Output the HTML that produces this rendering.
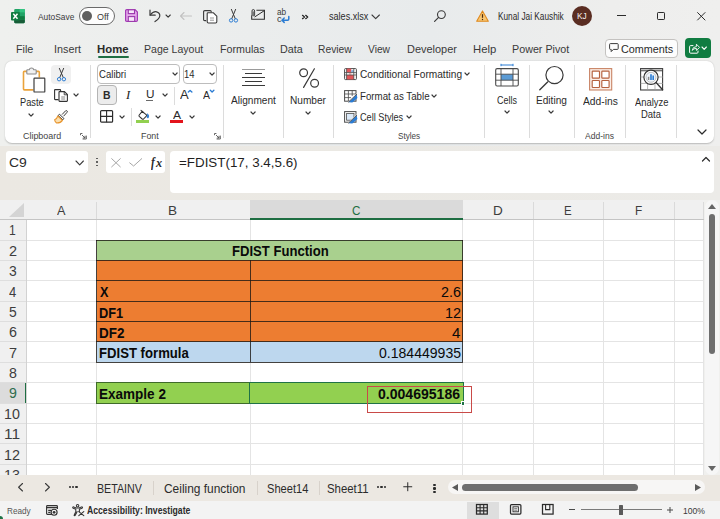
<!DOCTYPE html>
<html>
<head>
<meta charset="utf-8">
<title>sales.xlsx - Excel</title>
<style>
*{box-sizing:border-box;margin:0;padding:0}
html,body{width:720px;height:519px;overflow:hidden}
body{background:linear-gradient(90deg,#eff0ee 0%,#ebeded 35%,#e8ebec 60%,#eeeeed 85%,#efefee 100%);font-family:"Liberation Sans",sans-serif;color:#242424;position:relative}
.a{position:absolute}
.t{position:absolute;white-space:nowrap;line-height:1;transform-origin:0 0}
svg{position:absolute;overflow:visible}
</style>
</head>
<body>
<svg style="left:11.3px;top:8.5px" width="13.8" height="14.2" viewBox="0 0 13.8 14.2">
<rect x="3.2" y="0" width="10.6" height="14.2" rx="1.1" fill="#21a366"/>
<rect x="8.6" y="0" width="5.2" height="3.6" fill="#33c481"/>
<rect x="3.2" y="3.6" width="5.4" height="3.6" fill="#107c41"/>
<rect x="8.6" y="3.6" width="5.2" height="3.6" fill="#21a366"/>
<rect x="3.2" y="7.2" width="5.4" height="3.5" fill="#185c37"/>
<rect x="8.6" y="7.2" width="5.2" height="3.5" fill="#107c41"/>
<path d="M3.2 10.7 H13.8 V13.1 Q13.8 14.2 12.7 14.2 H4.3 Q3.2 14.2 3.2 13.1 Z" fill="#185c37"/>
<rect x="0" y="3" width="8.8" height="8.4" rx="0.9" fill="#107c41"/>
<path d="M2.3 4.7 L6.5 9.7 M6.5 4.7 L2.3 9.7" stroke="#fff" stroke-width="1.45" fill="none"/>
</svg>
<div class="t" style="left:38.00px;top:11.60px;font-size:9.92px;color:#3b3b3b;transform:scaleX(0.8446);">AutoSave</div>
<div class="a" style="left:78.7px;top:7.3px;width:36.4px;height:17.3px;background:#fdfdfd;border:1px solid #6a6a6a;border-radius:9px;"></div>
<div class="a" style="left:82.1px;top:10.8px;width:10.4px;height:10.4px;background:#5f5f5f;border-radius:50%;"></div>
<div class="t" style="left:97.10px;top:11.60px;font-size:9.92px;color:#3b3b3b;transform:scaleX(0.9064);">Off</div>
<svg style="left:125px;top:9.2px" width="13" height="13" viewBox="0 0 13 13">
<path d="M1.2 0.6 H10 L12.4 3 V11.2 Q12.4 12.4 11.2 12.4 H1.8 Q0.6 12.4 0.6 11.2 V1.8 Q0.6 0.6 1.8 0.6 Z" fill="#e3a9ea" stroke="#a43bb6" stroke-width="1.2"/>
<rect x="3.3" y="0.8" width="6.2" height="3.8" fill="#f7e9fa" stroke="#9a38ab" stroke-width="1.1"/>
<rect x="3.3" y="7.6" width="6.4" height="4.8" fill="#f7e9fa" stroke="#9a38ab" stroke-width="1.1"/>
</svg>
<svg style="left:149px;top:9px" width="12.6" height="13.4" viewBox="0 0 12.6 13.4">
<path d="M1 1 V6.2 H6.2" fill="none" stroke="#3a3a3a" stroke-width="1.2" stroke-linecap="round" stroke-linejoin="round"/>
<path d="M1.3 6 Q4 2.2 7.6 2.8 Q11 3.6 10.8 7 Q10.4 9.6 6 12.6" fill="none" stroke="#3a3a3a" stroke-width="1.2" stroke-linecap="round"/>
</svg>
<svg style="left:166.35px;top:14.700000000000001px" width="4.3" height="2.2" viewBox="0 0 4.3 2.2"><path d="M0 0 L2.15 2.2 L4.3 0" fill="none" stroke="#3a3a3a" stroke-width="1.1" stroke-linecap="round" stroke-linejoin="round"/></svg>
<svg style="left:180px;top:11.5px" width="12" height="8" viewBox="0 0 12 8"><path d="M0.5 4 H11.5 M4 0.5 L0.5 4 L4 7.5" fill="none" stroke="#c2c2c2" stroke-width="1.1" stroke-linecap="round" stroke-linejoin="round"/></svg>
<svg style="left:203px;top:9.5px" width="14.5" height="13.5" viewBox="0 0 14.5 13.5">
<path d="M3.2 10.6 H1.8 Q0.6 10.6 0.6 9.4 V1.8 Q0.6 0.6 1.8 0.6 H7.2 Q8.2 0.6 8.2 1.6 V2.6" fill="none" stroke="#3a3a3a" stroke-width="1.1"/>
<path d="M5 2.8 H10.4 L13.8 6.2 V11.8 Q13.8 13 12.6 13 H5.4 Q4.2 13 4.2 11.8 V3.6 Q4.2 2.8 5 2.8 Z" fill="#fff" stroke="#3a3a3a" stroke-width="1.1"/>
<path d="M7 8 H11 M7 10.2 H11" stroke="#8a8a8a" stroke-width="0.9"/>
</svg>
<svg style="left:229px;top:9px" width="9" height="14" viewBox="0 0 9 14">
<path d="M2.4 0.4 L6.2 9.6 M6.6 0.4 L2.8 9.6" stroke="#3a3a3a" stroke-width="1" fill="none" stroke-linecap="round"/>
<circle cx="2.1" cy="11.4" r="1.7" fill="none" stroke="#2b7cd3" stroke-width="1"/>
<circle cx="6.9" cy="11.4" r="1.7" fill="none" stroke="#2b7cd3" stroke-width="1"/>
</svg>
<svg style="left:250.5px;top:9.4px" width="14" height="11" viewBox="0 0 14 11">
<path d="M5.4 1.2 H13.4 V10.2 H0.7 V6.6" fill="none" stroke="#2f2f2f" stroke-width="1.1"/>
<path d="M13.4 1.6 L3.6 8" fill="none" stroke="#2f2f2f" stroke-width="1"/>
<path d="M1 7 V2 Q1 0.5 2.3 0.5 Q3.6 0.5 3.6 2 V6.2 Q3.6 7 2.9 7 Q2.2 7 2.2 6.2 V2.4" fill="none" stroke="#2f2f2f" stroke-width="0.9"/>
</svg>
<div class="t" style="left:276.64px;top:8.40px;font-size:8.60px;color:#3a3a3a;transform:scaleX(0.9577);">ab</div>
<div class="t" style="left:276.59px;top:15.30px;font-size:8.60px;color:#3a3a3a;transform:scaleX(1.0847);">c</div>
<svg style="left:280.5px;top:16px" width="8.5" height="7" viewBox="0 0 8.5 7"><path d="M7.8 0.6 V3 Q7.8 4.2 6.6 4.2 H1 M3.2 2 L1 4.2 L3.2 6.4" fill="none" stroke="#2b7cd3" stroke-width="1.5" stroke-linecap="round" stroke-linejoin="round"/></svg>
<svg style="left:302px;top:14.8px" width="6.5" height="4" viewBox="0 0 6.5 4"><path d="M0.5 0.3 L2.5 2 L0.5 3.7 M3.7 0.3 L5.7 2 L3.7 3.7" fill="none" stroke="#222" stroke-width="1.25" stroke-linecap="round" stroke-linejoin="round"/></svg>
<div class="t" style="left:329.22px;top:11.60px;font-size:10.20px;color:#2b2b2b;transform:scaleX(0.8914);">sales.xlsx</div>
<svg style="left:372.3px;top:14.599999999999998px" width="7.4" height="3.6" viewBox="0 0 7.4 3.6"><path d="M0 0 L3.7 3.6 L7.4 0" fill="none" stroke="#3a3a3a" stroke-width="1.1" stroke-linecap="round" stroke-linejoin="round"/></svg>
<svg style="left:433.5px;top:10px" width="12" height="12" viewBox="0 0 12 12"><circle cx="7.4" cy="4.6" r="3.9" fill="none" stroke="#3a3a3a" stroke-width="1.1"/><path d="M4.6 7.4 L0.6 11.4" stroke="#3a3a3a" stroke-width="1.2" stroke-linecap="round"/></svg>
<svg style="left:476px;top:10px" width="13" height="12" viewBox="0 0 13 12"><path d="M6.5 0.9 L12.3 11.2 H0.7 Z" fill="#f7c572" stroke="#e08a1e" stroke-width="1.1" stroke-linejoin="round"/><path d="M6.5 4.2 V7.8" stroke="#4a2a0a" stroke-width="1.2"/><circle cx="6.5" cy="9.5" r="0.7" fill="#4a2a0a"/></svg>
<div class="t" style="left:497.84px;top:11.60px;font-size:10.20px;color:#2b2b2b;transform:scaleX(0.8112);">Kunal Jai Kaushik</div>
<div class="a" style="left:571.5px;top:6px;width:20px;height:20px;background:#5a2d22;border-radius:50%;"></div>
<div class="t" style="left:576.72px;top:12.00px;font-size:8.38px;color:#f4f0ee;transform:scaleX(0.9956);">KJ</div>
<div class="a" style="left:617px;top:15.2px;width:8.5px;height:1px;background:#2b2b2b;"></div>
<div class="a" style="left:657px;top:12px;width:8.2px;height:8.2px;border:1px solid #2b2b2b;border-radius:1.2px;"></div>
<svg style="left:696.5px;top:11.5px" width="8.6" height="8.6" viewBox="0 0 8.6 8.6"><path d="M0.3 0.3 L8.3 8.3 M8.3 0.3 L0.3 8.3" stroke="#2b2b2b" stroke-width="1" fill="none"/></svg>
<div class="t" style="left:15.64px;top:43.00px;font-size:11.73px;color:#3a3a3a;transform:scaleX(0.9176);">File</div>
<div class="t" style="left:53.52px;top:43.00px;font-size:11.73px;color:#3a3a3a;transform:scaleX(0.9204);">Insert</div>
<div class="t" style="left:97.27px;top:43.00px;font-size:11.73px;color:#2b2b2b;transform:scaleX(0.9683);font-weight:bold;">Home</div>
<div class="a" style="left:98px;top:56.4px;width:30.5px;height:1.8px;background:#1e6e42;border-radius:1px;"></div>
<div class="t" style="left:143.66px;top:43.00px;font-size:11.73px;color:#3a3a3a;transform:scaleX(0.9000);">Page Layout</div>
<div class="t" style="left:219.64px;top:43.00px;font-size:11.73px;color:#3a3a3a;transform:scaleX(0.9134);">Formulas</div>
<div class="t" style="left:279.64px;top:43.00px;font-size:11.73px;color:#3a3a3a;transform:scaleX(0.9191);">Data</div>
<div class="t" style="left:317.68px;top:43.00px;font-size:11.73px;color:#3a3a3a;transform:scaleX(0.8771);">Review</div>
<div class="t" style="left:368.45px;top:43.00px;font-size:11.73px;color:#3a3a3a;transform:scaleX(0.8734);">View</div>
<div class="t" style="left:406.62px;top:43.00px;font-size:11.73px;color:#3a3a3a;transform:scaleX(0.9344);">Developer</div>
<div class="t" style="left:472.59px;top:43.00px;font-size:11.73px;color:#3a3a3a;transform:scaleX(0.9670);">Help</div>
<div class="t" style="left:511.64px;top:43.00px;font-size:11.73px;color:#3a3a3a;transform:scaleX(0.9159);">Power Pivot</div>
<div class="a" style="left:604.5px;top:38.5px;width:73.5px;height:19.5px;background:#fdfdfd;border:1px solid #c4c2c0;border-radius:4px;"></div>
<svg style="left:608.5px;top:43px" width="10" height="9.5" viewBox="0 0 10 9.5"><path d="M1.4 0.6 H8.4 Q9.2 0.6 9.2 1.4 V5.6 Q9.2 6.4 8.4 6.4 H4.4 L2.2 8.6 V6.4 H1.4 Q0.6 6.4 0.6 5.6 V1.4 Q0.6 0.6 1.4 0.6 Z" fill="none" stroke="#3a3a3a" stroke-width="1"/></svg>
<div class="t" style="left:620.98px;top:43.00px;font-size:11.73px;color:#2b2b2b;transform:scaleX(0.9227);">Comments</div>
<div class="a" style="left:684.5px;top:38px;width:26.5px;height:20px;background:#107c41;border-radius:4px;"></div>
<svg style="left:688.6px;top:42.5px" width="11" height="11" viewBox="0 0 11 11"><path d="M4.4 2.6 H1.6 Q0.6 2.6 0.6 3.6 V9.2 Q0.6 10.2 1.6 10.2 H8 Q9 10.2 9 9.2 V7.6" fill="none" stroke="#fff" stroke-width="1"/><path d="M3.2 7.4 Q3.6 3.8 7.4 3.6 V1.2 L10.6 4.4 L7.4 7.4 V5.4 Q4.8 5.2 3.2 7.4 Z" fill="none" stroke="#fff" stroke-width="0.9" stroke-linejoin="round"/></svg>
<svg style="left:702.1999999999999px;top:47.25px" width="4.4" height="2.3" viewBox="0 0 4.4 2.3"><path d="M0 0 L2.2 2.3 L4.4 0" fill="none" stroke="#fff" stroke-width="1.1" stroke-linecap="round" stroke-linejoin="round"/></svg>
<div class="a" style="left:5px;top:61px;width:708.5px;height:82.3px;background:#ffffff;border-radius:7px;box-shadow:0 0.5px 1.5px rgba(0,0,0,.22);"></div>
<div class="a" style="left:89.8px;top:65px;width:1px;height:73px;background:#dcdcdc;"></div>
<div class="a" style="left:223.0px;top:65px;width:1px;height:73px;background:#dcdcdc;"></div>
<div class="a" style="left:283.0px;top:65px;width:1px;height:73px;background:#dcdcdc;"></div>
<div class="a" style="left:333.0px;top:65px;width:1px;height:73px;background:#dcdcdc;"></div>
<div class="a" style="left:484.1px;top:65px;width:1px;height:73px;background:#dcdcdc;"></div>
<div class="a" style="left:528.8px;top:65px;width:1px;height:73px;background:#dcdcdc;"></div>
<div class="a" style="left:574.2px;top:65px;width:1px;height:73px;background:#dcdcdc;"></div>
<div class="a" style="left:624.8px;top:65px;width:1px;height:73px;background:#dcdcdc;"></div>
<div class="a" style="left:676.2px;top:65px;width:1px;height:73px;background:#dcdcdc;"></div>
<svg style="left:22px;top:67px" width="24" height="26" viewBox="0 0 24 26">
<path d="M5.2 4.4 H2.4 Q1.5 4.4 1.5 5.3 V22 Q1.5 22.9 2.4 22.9 H11.4" fill="none" stroke="#eaa33b" stroke-width="1.6"/>
<path d="M14 4.4 H16.4 Q17.3 4.4 17.3 5.3 V10.4" fill="none" stroke="#eaa33b" stroke-width="1.6"/>
<path d="M4.8 6.2 V3.6 Q4.8 2.8 5.6 2.8 H7.2 Q7.6 1 9.5 1 Q11.4 1 11.8 2.8 H13.4 Q14.2 2.8 14.2 3.6 V6.2 Q14.2 7 13.4 7 H5.6 Q4.8 7 4.8 6.2 Z" fill="#f1f1f1" stroke="#8a8a8a" stroke-width="1.1"/>
<rect x="12" y="11.2" width="10.8" height="13.8" rx="0.6" fill="#fff" stroke="#3f3f3f" stroke-width="1.2"/>
</svg>
<div class="t" style="left:19.74px;top:97.20px;font-size:11.45px;color:#2b2b2b;transform:scaleX(0.8090);">Paste</div>
<svg style="left:29.15px;top:113.75px" width="4.1" height="2.1" viewBox="0 0 4.1 2.1"><path d="M0 0 L2.05 2.1 L4.1 0" fill="none" stroke="#3a3a3a" stroke-width="1.2" stroke-linecap="round" stroke-linejoin="round"/></svg>
<div class="a" style="left:51px;top:64.5px;width:20px;height:19px;background:#f0f0f0;border-radius:4px;"></div>
<svg style="left:56.5px;top:67.5px" width="9" height="14" viewBox="0 0 9 14">
<path d="M2.4 0.4 L6.2 9.4 M6.6 0.4 L2.8 9.4" stroke="#3a3a3a" stroke-width="1" fill="none" stroke-linecap="round"/>
<circle cx="2.1" cy="11.2" r="1.7" fill="none" stroke="#2b7cd3" stroke-width="1"/>
<circle cx="6.9" cy="11.2" r="1.7" fill="none" stroke="#2b7cd3" stroke-width="1"/>
</svg>
<svg style="left:54px;top:89px" width="14" height="13" viewBox="0 0 14 13">
<path d="M4.6 10.6 H1.2 Q0.6 10.6 0.6 10 V1.2 Q0.6 0.6 1.2 0.6 H6 Q6.6 0.6 6.6 1.2 V2.2" fill="none" stroke="#333" stroke-width="1.1"/>
<path d="M5.6 2.6 H10.4 L13.4 5.6 V11.8 Q13.4 12.4 12.8 12.4 H5.6 Q5 12.4 5 11.8 V3.2 Q5 2.6 5.6 2.6 Z" fill="#fff" stroke="#333" stroke-width="1.1"/>
<path d="M10.2 2.8 V5.8 H13.2" fill="none" stroke="#333" stroke-width="0.9"/>
<path d="M7.2 8 H11.2 M7.2 10 H11.2" stroke="#777" stroke-width="0.9"/>
</svg>
<svg style="left:74.15px;top:94.35000000000001px" width="4.1" height="2.1" viewBox="0 0 4.1 2.1"><path d="M0 0 L2.05 2.1 L4.1 0" fill="none" stroke="#3a3a3a" stroke-width="1.2" stroke-linecap="round" stroke-linejoin="round"/></svg>
<svg style="left:54px;top:110px" width="14" height="13.5" viewBox="0 0 14 13.5">
<path d="M8 4.6 L11.6 0.8 Q12.6 0.2 13.2 1 Q13.6 1.8 12.8 2.6 L9.6 6.2" fill="#fff" stroke="#3a3a3a" stroke-width="1"/>
<path d="M5.4 4.2 L10 8.6 L8.8 9.8 L4.2 5.6 Z" fill="#fff" stroke="#3a3a3a" stroke-width="1"/>
<path d="M3.8 6 L8.4 10.4 Q6.8 13 2.6 13 Q0.8 11.6 0.6 9.8 Q2.8 9.2 3.8 6 Z" fill="#fbe0b0" stroke="#e8952e" stroke-width="1.1" stroke-linejoin="round"/>
</svg>
<div class="t" style="left:23.36px;top:131.60px;font-size:8.94px;color:#444;transform:scaleX(0.9987);">Clipboard</div>
<svg style="left:80.2px;top:132.6px" width="7" height="6.5" viewBox="0 0 7 6.5"><path d="M0.5 2.2 V0.5 H2.4 M6.3 2.6 V6 H2.6" fill="none" stroke="#555" stroke-width="0.9"/><path d="M2 2 L5 5 M5 2.8 V5 H2.8" fill="none" stroke="#555" stroke-width="0.9"/></svg>
<svg style="left:214.2px;top:132.6px" width="7" height="6.5" viewBox="0 0 7 6.5"><path d="M0.5 2.2 V0.5 H2.4 M6.3 2.6 V6 H2.6" fill="none" stroke="#555" stroke-width="0.9"/><path d="M2 2 L5 5 M5 2.8 V5 H2.8" fill="none" stroke="#555" stroke-width="0.9"/></svg>
<div class="a" style="left:97px;top:64.3px;width:83.4px;height:19.3px;background:#fff;border:1px solid #bdbdbd;border-radius:4px;"></div>
<div class="t" style="left:99.00px;top:69.00px;font-size:10.89px;color:#2b2b2b;transform:scaleX(0.8814);">Calibri</div>
<svg style="left:173.45px;top:73.15px" width="4.1" height="2.1" viewBox="0 0 4.1 2.1"><path d="M0 0 L2.05 2.1 L4.1 0" fill="none" stroke="#3a3a3a" stroke-width="1.2" stroke-linecap="round" stroke-linejoin="round"/></svg>
<div class="a" style="left:182.5px;top:64.3px;width:34.7px;height:19.3px;background:#fff;border:1px solid #bdbdbd;border-radius:4px;"></div>
<div class="t" style="left:184.32px;top:70.00px;font-size:10.34px;color:#2b2b2b;transform:scaleX(0.9102);">14</div>
<svg style="left:210.45px;top:73.15px" width="4.1" height="2.1" viewBox="0 0 4.1 2.1"><path d="M0 0 L2.05 2.1 L4.1 0" fill="none" stroke="#3a3a3a" stroke-width="1.2" stroke-linecap="round" stroke-linejoin="round"/></svg>
<div class="a" style="left:97.4px;top:85.4px;width:19.2px;height:19.8px;background:#ececec;border:1px solid #b4b4b4;border-radius:4px;"></div>
<div class="t" style="left:103.13px;top:89.00px;font-size:11.73px;color:#2b2b2b;transform:scaleX(0.8904);font-weight:bold;">B</div>
<div class="t" style="left:126.46px;top:87.60px;font-size:13.00px;color:#222;transform:scaleX(0.9846);font-style:italic;font-family:'Liberation Serif',serif;">I</div>
<div class="t" style="left:145.64px;top:89.60px;font-size:10.20px;color:#2b2b2b;transform:scaleX(1.1527);">U</div>
<div class="a" style="left:146.2px;top:99.5px;width:7.2px;height:1.3px;background:#6a6a6a;"></div>
<svg style="left:163.45px;top:94.35000000000001px" width="4.1" height="2.1" viewBox="0 0 4.1 2.1"><path d="M0 0 L2.05 2.1 L4.1 0" fill="none" stroke="#3a3a3a" stroke-width="1.2" stroke-linecap="round" stroke-linejoin="round"/></svg>
<div class="a" style="left:173.6px;top:86.5px;width:1px;height:18px;background:#dcdcdc;"></div>
<div class="t" style="left:180.34px;top:88.40px;font-size:13.13px;color:#2b2b2b;transform:scaleX(0.9899);">A</div>
<svg style="left:188.4px;top:89.8px" width="4.2" height="2.4" viewBox="0 0 4.2 2.4"><path d="M0.3 2.1 L2.1 0.4 L3.9 2.1" fill="none" stroke="#2b7cd3" stroke-width="1.35" stroke-linecap="round" stroke-linejoin="round"/></svg>
<div class="t" style="left:203.30px;top:90.40px;font-size:10.61px;color:#2b2b2b;transform:scaleX(0.9912);">A</div>
<svg style="left:209.9px;top:89.6px" width="4.2" height="2.4" viewBox="0 0 4.2 2.4"><path d="M0.3 0.3 L2.1 2 L3.9 0.3" fill="none" stroke="#2b7cd3" stroke-width="1.35" stroke-linecap="round" stroke-linejoin="round"/></svg>
<svg style="left:100.1px;top:110.2px" width="13.2" height="12.8" viewBox="0 0 13.2 12.8"><rect x="0.6" y="0.6" width="12" height="11.6" rx="1" fill="none" stroke="#2b2b2b" stroke-width="1.2"/><path d="M6.6 0.6 V12.2 M0.6 6.4 H12.6" stroke="#2b2b2b" stroke-width="1.1"/></svg>
<svg style="left:120.45px;top:115.75px" width="4.1" height="2.1" viewBox="0 0 4.1 2.1"><path d="M0 0 L2.05 2.1 L4.1 0" fill="none" stroke="#3a3a3a" stroke-width="1.2" stroke-linecap="round" stroke-linejoin="round"/></svg>
<div class="a" style="left:130.6px;top:107.5px;width:1px;height:18.5px;background:#dcdcdc;"></div>
<svg style="left:137.5px;top:110px" width="12" height="10" viewBox="0 0 12 10">
<path d="M4.2 1.4 L9 5.4 L5.6 9 Q4.9 9.5 4.2 9 L1.2 6.4 Q0.7 5.7 1.2 5 Z" fill="#fff" stroke="#333" stroke-width="1.05" stroke-linejoin="round"/>
<path d="M3 0.4 L5.6 2.6" stroke="#333" stroke-width="1.05" stroke-linecap="round"/>
<path d="M9.4 3.6 Q11.6 6.2 10.2 7.8 Q9 8.2 9 6.6" fill="#2b7cd3" stroke="#2b7cd3" stroke-width="0.9"/>
</svg>
<div class="a" style="left:136.1px;top:120.2px;width:13.4px;height:3.2px;background:#92d050;"></div>
<svg style="left:156.45px;top:115.75px" width="4.1" height="2.1" viewBox="0 0 4.1 2.1"><path d="M0 0 L2.05 2.1 L4.1 0" fill="none" stroke="#3a3a3a" stroke-width="1.2" stroke-linecap="round" stroke-linejoin="round"/></svg>
<div class="t" style="left:173.00px;top:110.00px;font-size:11.59px;color:#2b2b2b;transform:scaleX(1.0407);">A</div>
<div class="a" style="left:170px;top:120.2px;width:13.1px;height:3.2px;background:#e3141c;"></div>
<svg style="left:189.95px;top:115.75px" width="4.1" height="2.1" viewBox="0 0 4.1 2.1"><path d="M0 0 L2.05 2.1 L4.1 0" fill="none" stroke="#3a3a3a" stroke-width="1.2" stroke-linecap="round" stroke-linejoin="round"/></svg>
<div class="t" style="left:141.25px;top:131.60px;font-size:8.94px;color:#444;transform:scaleX(0.9963);">Font</div>
<div class="a" style="left:241.8px;top:68.60000000000001px;width:22.9px;height:1.2px;background:#9a9a9a;"></div>
<div class="a" style="left:244.9px;top:72.55000000000001px;width:16.8px;height:1.2px;background:#3a3a3a;"></div>
<div class="a" style="left:241.8px;top:76.5px;width:22.9px;height:1.2px;background:#3a3a3a;"></div>
<div class="a" style="left:244.9px;top:80.5px;width:16.8px;height:1.2px;background:#3a3a3a;"></div>
<div class="a" style="left:241.8px;top:84.5px;width:22.9px;height:1.2px;background:#3a3a3a;"></div>
<div class="t" style="left:231.20px;top:95.20px;font-size:11.45px;color:#2b2b2b;transform:scaleX(0.8817);">Alignment</div>
<svg style="left:250.75px;top:111.55px" width="4.1" height="2.1" viewBox="0 0 4.1 2.1"><path d="M0 0 L2.05 2.1 L4.1 0" fill="none" stroke="#3a3a3a" stroke-width="1.2" stroke-linecap="round" stroke-linejoin="round"/></svg>
<svg style="left:298.5px;top:68px" width="20" height="20" viewBox="0 0 20 20"><circle cx="4.6" cy="4.8" r="3.9" fill="none" stroke="#3a3a3a" stroke-width="1.2"/><circle cx="15.6" cy="15.2" r="3.9" fill="none" stroke="#3a3a3a" stroke-width="1.2"/><path d="M15.4 0.8 L4.6 19.4" stroke="#3a3a3a" stroke-width="1.2" stroke-linecap="round"/></svg>
<div class="t" style="left:290.17px;top:95.20px;font-size:11.45px;color:#2b2b2b;transform:scaleX(0.8847);">Number</div>
<svg style="left:305.75px;top:111.55px" width="4.1" height="2.1" viewBox="0 0 4.1 2.1"><path d="M0 0 L2.05 2.1 L4.1 0" fill="none" stroke="#3a3a3a" stroke-width="1.2" stroke-linecap="round" stroke-linejoin="round"/></svg>
<svg style="left:344px;top:68px" width="13" height="12.2" viewBox="0 0 13 12.2">
<rect x="0.6" y="0.6" width="11.8" height="11" rx="0.8" fill="#fff" stroke="#4a4a4a" stroke-width="1"/>
<rect x="2.6" y="0.6" width="4.6" height="4" fill="#e2575a"/><rect x="7.2" y="2.2" width="2.6" height="2.4" fill="#7ea6d8"/>
<rect x="2.6" y="7" width="7.2" height="4.4" fill="#e2575a"/><rect x="4.8" y="4.6" width="2.6" height="2.4" fill="#f3b5b6"/>
<path d="M2.6 0.6 V11.6 M9.8 0.6 V11.6 M0.6 4.6 H12.4 M0.6 7 H12.4" stroke="#4a4a4a" stroke-width="0.8"/>
</svg>
<div class="t" style="left:360.08px;top:69.20px;font-size:10.89px;color:#2b2b2b;transform:scaleX(0.9326);">Conditional Formatting</div>
<svg style="left:465.45px;top:73.15px" width="4.1" height="2.1" viewBox="0 0 4.1 2.1"><path d="M0 0 L2.05 2.1 L4.1 0" fill="none" stroke="#3a3a3a" stroke-width="1.2" stroke-linecap="round" stroke-linejoin="round"/></svg>
<svg style="left:344px;top:89.5px" width="13.5" height="12.6" viewBox="0 0 13.5 12.6">
<rect x="0.6" y="0.6" width="11.4" height="10.6" fill="#fff" stroke="#4a4a4a" stroke-width="1"/>
<path d="M4.4 0.6 V11.2 M8.2 0.6 V6 M0.6 4 H12 M0.6 7.6 H7" stroke="#4a4a4a" stroke-width="0.8"/>
<path d="M4.6 12.2 L12.6 4.6 L13.4 8 L8.4 12.4 Z" fill="#2b7cd3"/>
<path d="M3.6 12.4 L12.8 3.6" stroke="#fff" stroke-width="0.8"/>
<path d="M4 12.4 L13 4" stroke="#3a3a3a" stroke-width="0.8"/>
</svg>
<div class="t" style="left:359.82px;top:90.80px;font-size:10.89px;color:#2b2b2b;transform:scaleX(0.8948);">Format as Table</div>
<svg style="left:432.45px;top:94.55px" width="4.1" height="2.1" viewBox="0 0 4.1 2.1"><path d="M0 0 L2.05 2.1 L4.1 0" fill="none" stroke="#3a3a3a" stroke-width="1.2" stroke-linecap="round" stroke-linejoin="round"/></svg>
<svg style="left:344px;top:111px" width="13.5" height="12.6" viewBox="0 0 13.5 12.6">
<rect x="0.6" y="0.6" width="11.4" height="10.6" fill="#fff" stroke="#4a4a4a" stroke-width="1"/>
<rect x="2.6" y="2.6" width="7.4" height="6.6" fill="#dbe9f8" stroke="#4a4a4a" stroke-width="0.8"/>
<path d="M4.6 12.2 L12.6 4.6 L13.4 8 L8.4 12.4 Z" fill="#2b7cd3"/>
<path d="M3.6 12.4 L12.8 3.6" stroke="#fff" stroke-width="0.8"/>
<path d="M4 12.4 L13 4" stroke="#3a3a3a" stroke-width="0.8"/>
</svg>
<div class="t" style="left:360.13px;top:112.40px;font-size:10.89px;color:#2b2b2b;transform:scaleX(0.8406);">Cell Styles</div>
<svg style="left:406.95px;top:116.15px" width="4.1" height="2.1" viewBox="0 0 4.1 2.1"><path d="M0 0 L2.05 2.1 L4.1 0" fill="none" stroke="#3a3a3a" stroke-width="1.2" stroke-linecap="round" stroke-linejoin="round"/></svg>
<div class="t" style="left:397.60px;top:131.60px;font-size:8.94px;color:#444;transform:scaleX(0.9125);">Styles</div>
<svg style="left:495px;top:64px" width="24" height="23" viewBox="0 0 24 23">
<path d="M6 1 H18 M6 -0.2 V2.2 M18 -0.2 V2.2" stroke="#2b7cd3" stroke-width="1" fill="none"/>
<rect x="0.7" y="4.6" width="22.6" height="17.4" rx="1.4" fill="#fff" stroke="#4a4a4a" stroke-width="1.1"/>
<rect x="6" y="10.2" width="12" height="6" fill="#5b9bd5"/>
<path d="M6 4.6 V22 M18 4.6 V22 M0.7 10.2 H23.3 M0.7 16.2 H23.3" stroke="#4a4a4a" stroke-width="0.9"/>
</svg>
<div class="t" style="left:496.95px;top:94.80px;font-size:11.17px;color:#2b2b2b;transform:scaleX(0.8042);">Cells</div>
<svg style="left:504.55px;top:111.35000000000001px" width="4.1" height="2.1" viewBox="0 0 4.1 2.1"><path d="M0 0 L2.05 2.1 L4.1 0" fill="none" stroke="#3a3a3a" stroke-width="1.2" stroke-linecap="round" stroke-linejoin="round"/></svg>
<svg style="left:539px;top:65.6px" width="25" height="25" viewBox="0 0 25 25"><circle cx="15.5" cy="9.1" r="8.6" fill="none" stroke="#3a3a3a" stroke-width="1.2"/><path d="M8.6 16 L0.8 23.8" stroke="#3a3a3a" stroke-width="1.4" stroke-linecap="round"/></svg>
<div class="t" style="left:535.77px;top:95.00px;font-size:11.45px;color:#2b2b2b;transform:scaleX(0.8826);">Editing</div>
<svg style="left:549.1500000000001px;top:111.35000000000001px" width="4.1" height="2.1" viewBox="0 0 4.1 2.1"><path d="M0 0 L2.05 2.1 L4.1 0" fill="none" stroke="#3a3a3a" stroke-width="1.2" stroke-linecap="round" stroke-linejoin="round"/></svg>
<svg style="left:588.7px;top:68px" width="23.3" height="22.6" viewBox="0 0 23.3 22.6">
<rect x="0.6" y="0.6" width="22.1" height="21.4" fill="#fbeee7" stroke="#c98465" stroke-width="1.1"/>
<rect x="3.2" y="3.1" width="7.3" height="7" rx="0.7" fill="#fff" stroke="#b5613e" stroke-width="1.15"/>
<rect x="12.8" y="3.1" width="7.3" height="7" rx="0.7" fill="#fff" stroke="#b5613e" stroke-width="1.15"/>
<rect x="3.2" y="12.5" width="7.3" height="7" rx="0.7" fill="#fff" stroke="#b5613e" stroke-width="1.15"/>
<rect x="12.8" y="12.5" width="7.3" height="7" rx="0.7" fill="#fff" stroke="#b5613e" stroke-width="1.15"/>
</svg>
<div class="t" style="left:582.80px;top:96.40px;font-size:10.89px;color:#2b2b2b;transform:scaleX(0.9425);">Add-ins</div>
<div class="t" style="left:585.40px;top:131.60px;font-size:8.94px;color:#444;transform:scaleX(0.9553);">Add-ins</div>
<svg style="left:640px;top:68px" width="23.2" height="22.6" viewBox="0 0 23.2 22.6">
<rect x="0.6" y="0.6" width="22" height="21.4" fill="#fff" stroke="#3f3f3f" stroke-width="1.1"/>
<rect x="0.6" y="0.6" width="22" height="2.2" fill="#c9c9c9" stroke="#3f3f3f" stroke-width="0.9"/>
<path d="M0.6 9 H23 M0.6 15.4 H23 M7.6 2.8 V22 M15 15 V22" stroke="#9a9a9a" stroke-width="0.7"/>
<circle cx="11" cy="9.3" r="7.1" fill="#fff" stroke="#333" stroke-width="1.2"/>
<circle cx="11" cy="9.3" r="5" fill="#eef4fb" stroke="#9a9a9a" stroke-width="0.6"/>
<path d="M8.6 12 V8.8" stroke="#8a8a8a" stroke-width="1.5"/><path d="M11 12 V6.2 M13.2 12 V7.6" stroke="#2b7cd3" stroke-width="1.6"/>
<path d="M16.2 14.6 L22.6 21.8" stroke="#333" stroke-width="1.4" stroke-linecap="round"/>
</svg>
<div class="t" style="left:634.80px;top:96.60px;font-size:11.17px;color:#2b2b2b;transform:scaleX(0.8445);">Analyze</div>
<div class="t" style="left:641.26px;top:110.40px;font-size:10.34px;color:#2b2b2b;transform:scaleX(0.9143);">Data</div>
<svg style="left:698.0px;top:130.4px" width="8" height="4" viewBox="0 0 8 4"><path d="M0 0 L4.0 4 L8 0" fill="none" stroke="#2b2b2b" stroke-width="1.2" stroke-linecap="round" stroke-linejoin="round"/></svg>
<div class="a" style="left:0px;top:146px;width:720px;height:53.5px;background:linear-gradient(90deg,#ebe8e2 0%,#ebe9e4 50%,#ecebe8 100%);"></div>
<div class="a" style="left:6px;top:151px;width:82px;height:22px;background:#ffffff;border-radius:3px;"></div>
<div class="t" style="left:8.91px;top:157.20px;font-size:12.57px;color:#2b2b2b;transform:scaleX(1.1072);">C9</div>
<svg style="left:76.1px;top:161.1px" width="7.4" height="3.8" viewBox="0 0 7.4 3.8"><path d="M0 0 L3.7 3.8 L7.4 0" fill="none" stroke="#3a3a3a" stroke-width="1.1" stroke-linecap="round" stroke-linejoin="round"/></svg>
<div class="a" style="left:96.3px;top:158.0px;width:1.3px;height:1.3px;background:#4a4a4a;border-radius:50%;"></div>
<div class="a" style="left:96.3px;top:161.4px;width:1.3px;height:1.3px;background:#4a4a4a;border-radius:50%;"></div>
<div class="a" style="left:96.3px;top:164.8px;width:1.3px;height:1.3px;background:#4a4a4a;border-radius:50%;"></div>
<div class="a" style="left:106px;top:151px;width:59px;height:22px;background:#ffffff;border-radius:3px;"></div>
<svg style="left:111px;top:157.5px" width="10" height="9.5" viewBox="0 0 10 9.5"><path d="M0.4 0.4 L9.6 9.1 M9.6 0.4 L0.4 9.1" stroke="#a6a6a6" stroke-width="1" fill="none"/></svg>
<svg style="left:129px;top:158px" width="13.5" height="8.5" viewBox="0 0 13.5 8.5"><path d="M0.4 4.6 L4.6 8 L13 0.4" stroke="#a6a6a6" stroke-width="1" fill="none"/></svg>
<div class="t" style="left:151.30px;top:155.20px;font-size:14.50px;color:#2b2b2b;transform:scaleX(0.7833);font-weight:bold;font-style:italic;font-family:'Liberation Serif',serif;">f</div>
<div class="t" style="left:155.78px;top:157.20px;font-size:12.50px;color:#2b2b2b;transform:scaleX(0.9796);font-weight:bold;font-style:italic;font-family:'Liberation Serif',serif;">x</div>
<div class="a" style="left:170px;top:151px;width:543.5px;height:42px;background:#ffffff;border-radius:4px;"></div>
<div class="t" style="left:179.37px;top:156.10px;font-size:13.27px;color:#1f1f1f;transform:scaleX(1.0081);">=FDIST(17, 3.4,5.6)</div>
<svg style="left:701.6px;top:157.4px" width="8.4" height="4.4" viewBox="0 0 8.4 4.4"><path d="M0.5 4 L4 0.5 L7.5 4" fill="none" stroke="#2b2b2b" stroke-width="1.2" stroke-linecap="round" stroke-linejoin="round"/></svg>
<div class="a" style="left:0px;top:199.5px;width:703.5px;height:275px;background:#ffffff;"></div>
<div class="a" style="left:0px;top:199.5px;width:703.5px;height:20.2px;background:#f0f0f0;"></div>
<div class="a" style="left:0px;top:199.5px;width:26px;height:275px;background:#f0f0f0;"></div>
<div class="a" style="left:26px;top:239.575px;width:677.5px;height:1px;background:#e4e4e4;"></div>
<div class="a" style="left:26px;top:259.95px;width:677.5px;height:1px;background:#e4e4e4;"></div>
<div class="a" style="left:26px;top:280.325px;width:677.5px;height:1px;background:#e4e4e4;"></div>
<div class="a" style="left:26px;top:300.7px;width:677.5px;height:1px;background:#e4e4e4;"></div>
<div class="a" style="left:26px;top:321.075px;width:677.5px;height:1px;background:#e4e4e4;"></div>
<div class="a" style="left:26px;top:341.45px;width:677.5px;height:1px;background:#e4e4e4;"></div>
<div class="a" style="left:26px;top:361.825px;width:677.5px;height:1px;background:#e4e4e4;"></div>
<div class="a" style="left:26px;top:382.2px;width:677.5px;height:1px;background:#e4e4e4;"></div>
<div class="a" style="left:26px;top:402.575px;width:677.5px;height:1px;background:#e4e4e4;"></div>
<div class="a" style="left:26px;top:422.95px;width:677.5px;height:1px;background:#e4e4e4;"></div>
<div class="a" style="left:26px;top:443.325px;width:677.5px;height:1px;background:#e4e4e4;"></div>
<div class="a" style="left:26px;top:463.7px;width:677.5px;height:1px;background:#e4e4e4;"></div>
<div class="a" style="left:26px;top:484.075px;width:677.5px;height:1px;background:#e4e4e4;"></div>
<div class="a" style="left:95.5px;top:219.7px;width:1px;height:255px;background:#e4e4e4;"></div>
<div class="a" style="left:249.75px;top:219.7px;width:1px;height:255px;background:#e4e4e4;"></div>
<div class="a" style="left:462.25px;top:219.7px;width:1px;height:255px;background:#e4e4e4;"></div>
<div class="a" style="left:533.0px;top:219.7px;width:1px;height:255px;background:#e4e4e4;"></div>
<div class="a" style="left:603.0px;top:219.7px;width:1px;height:255px;background:#e4e4e4;"></div>
<div class="a" style="left:673.5px;top:219.7px;width:1px;height:255px;background:#e4e4e4;"></div>
<div class="a" style="left:703.0px;top:219.7px;width:1px;height:255px;background:#e4e4e4;"></div>
<div class="a" style="left:0px;top:239.575px;width:26px;height:1px;background:#dedede;"></div>
<div class="a" style="left:0px;top:259.95px;width:26px;height:1px;background:#dedede;"></div>
<div class="a" style="left:0px;top:280.325px;width:26px;height:1px;background:#dedede;"></div>
<div class="a" style="left:0px;top:300.7px;width:26px;height:1px;background:#dedede;"></div>
<div class="a" style="left:0px;top:321.075px;width:26px;height:1px;background:#dedede;"></div>
<div class="a" style="left:0px;top:341.45px;width:26px;height:1px;background:#dedede;"></div>
<div class="a" style="left:0px;top:361.825px;width:26px;height:1px;background:#dedede;"></div>
<div class="a" style="left:0px;top:382.2px;width:26px;height:1px;background:#dedede;"></div>
<div class="a" style="left:0px;top:402.575px;width:26px;height:1px;background:#dedede;"></div>
<div class="a" style="left:0px;top:422.95px;width:26px;height:1px;background:#dedede;"></div>
<div class="a" style="left:0px;top:443.325px;width:26px;height:1px;background:#dedede;"></div>
<div class="a" style="left:0px;top:463.7px;width:26px;height:1px;background:#dedede;"></div>
<div class="a" style="left:0px;top:484.075px;width:26px;height:1px;background:#dedede;"></div>
<div class="a" style="left:95.5px;top:201.5px;width:1px;height:18.2px;background:#dadada;"></div>
<div class="a" style="left:249.75px;top:201.5px;width:1px;height:18.2px;background:#dadada;"></div>
<div class="a" style="left:462.25px;top:201.5px;width:1px;height:18.2px;background:#dadada;"></div>
<div class="a" style="left:533.0px;top:201.5px;width:1px;height:18.2px;background:#dadada;"></div>
<div class="a" style="left:603.0px;top:201.5px;width:1px;height:18.2px;background:#dadada;"></div>
<div class="a" style="left:673.5px;top:201.5px;width:1px;height:18.2px;background:#dadada;"></div>
<div class="a" style="left:703.0px;top:201.5px;width:1px;height:18.2px;background:#dadada;"></div>
<div class="a" style="left:25.5px;top:219.7px;width:1px;height:255px;background:#d2d2d2;"></div>
<div class="a" style="left:0px;top:218.7px;width:703.5px;height:1px;background:#c4c4c4;"></div>
<div class="a" style="left:250.25px;top:199.5px;width:212.5px;height:20.2px;background:#dadada;"></div>
<div class="a" style="left:250.25px;top:218.1px;width:212.5px;height:1.6px;background:#1e6e42;"></div>
<div class="a" style="left:0px;top:382.7px;width:26px;height:20.375px;background:#dcdcdc;"></div>
<div class="a" style="left:24.8px;top:382.7px;width:1.6px;height:20.375px;background:#1e6e42;"></div>
<svg style="left:9px;top:202.8px" width="15" height="14" viewBox="0 0 15 14"><path d="M15 0 V14 H0 Z" fill="#d4d4d4"/></svg>
<div class="t" style="left:56.74px;top:204.20px;font-size:13.41px;color:#3d3d3d;transform:scaleX(0.9465);">A</div>
<div class="t" style="left:168.39px;top:204.20px;font-size:13.41px;color:#3d3d3d;transform:scaleX(1.0105);">B</div>
<div class="t" style="left:352.20px;top:204.20px;font-size:13.41px;color:#1e6e42;transform:scaleX(0.8706);">C</div>
<div class="t" style="left:492.99px;top:204.20px;font-size:13.41px;color:#3d3d3d;transform:scaleX(1.0079);">D</div>
<div class="t" style="left:564.44px;top:204.20px;font-size:13.41px;color:#3d3d3d;transform:scaleX(0.8552);">E</div>
<div class="t" style="left:634.86px;top:204.20px;font-size:13.41px;color:#3d3d3d;transform:scaleX(0.8838);">F</div>
<div class="t" style="left:9.07px;top:224.47px;font-size:13.83px;color:#3d3d3d;transform:scaleX(0.8758);">1</div>
<div class="t" style="left:8.58px;top:244.85px;font-size:13.83px;color:#3d3d3d;transform:scaleX(1.0455);">2</div>
<div class="t" style="left:8.80px;top:265.22px;font-size:13.83px;color:#3d3d3d;transform:scaleX(1.0057);">3</div>
<div class="t" style="left:9.01px;top:285.60px;font-size:13.83px;color:#3d3d3d;transform:scaleX(0.9429);">4</div>
<div class="t" style="left:8.73px;top:305.97px;font-size:13.83px;color:#3d3d3d;transform:scaleX(1.0057);">5</div>
<div class="t" style="left:8.59px;top:326.35px;font-size:13.83px;color:#3d3d3d;transform:scaleX(1.0353);">6</div>
<div class="t" style="left:8.58px;top:346.72px;font-size:13.83px;color:#3d3d3d;transform:scaleX(1.0455);">7</div>
<div class="t" style="left:8.66px;top:367.10px;font-size:13.83px;color:#3d3d3d;transform:scaleX(1.0252);">8</div>
<div class="t" style="left:8.66px;top:387.47px;font-size:13.83px;color:#2f6e4e;transform:scaleX(1.0252);">9</div>
<div class="t" style="left:4.40px;top:407.85px;font-size:13.83px;color:#3d3d3d;transform:scaleX(1.0327);">10</div>
<div class="t" style="left:4.30px;top:428.22px;font-size:13.83px;color:#3d3d3d;transform:scaleX(1.1248);">11</div>
<div class="t" style="left:4.39px;top:448.60px;font-size:13.83px;color:#3d3d3d;transform:scaleX(1.0422);">12</div>
<div class="t" style="left:4.40px;top:468.97px;font-size:13.83px;color:#3d3d3d;transform:scaleX(1.0374);">13</div>
<div class="a" style="left:96.5px;top:240.075px;width:366.25px;height:20.375px;background:#a9d08e;"></div>
<div class="a" style="left:96.5px;top:260.45px;width:366.25px;height:81.5px;background:#ed7d31;"></div>
<div class="a" style="left:96.5px;top:341.95px;width:366.25px;height:20.375px;background:#bdd7ee;"></div>
<div class="a" style="left:96.5px;top:382.7px;width:366.25px;height:20.375px;background:#92d050;"></div>
<div class="a" style="left:96.0px;top:239.575px;width:367.25px;height:1px;background:rgba(28,24,20,0.8);"></div>
<div class="a" style="left:96.0px;top:259.95px;width:367.25px;height:1px;background:rgba(28,24,20,0.8);"></div>
<div class="a" style="left:96.0px;top:280.325px;width:367.25px;height:1px;background:rgba(28,24,20,0.8);"></div>
<div class="a" style="left:96.0px;top:300.7px;width:367.25px;height:1px;background:rgba(28,24,20,0.8);"></div>
<div class="a" style="left:96.0px;top:321.075px;width:367.25px;height:1px;background:rgba(28,24,20,0.8);"></div>
<div class="a" style="left:96.0px;top:341.45px;width:367.25px;height:1px;background:rgba(28,24,20,0.8);"></div>
<div class="a" style="left:96.0px;top:361.825px;width:367.25px;height:1px;background:rgba(28,24,20,0.8);"></div>
<div class="a" style="left:96.0px;top:240.075px;width:1px;height:122.25px;background:rgba(28,24,20,0.8);"></div>
<div class="a" style="left:462.25px;top:240.075px;width:1px;height:122.25px;background:rgba(28,24,20,0.8);"></div>
<div class="a" style="left:249.75px;top:260.45px;width:1px;height:101.875px;background:rgba(28,24,20,0.8);"></div>
<div class="a" style="left:96.0px;top:382.2px;width:154.25px;height:1px;background:#3f6b2a;"></div>
<div class="a" style="left:96.0px;top:402.575px;width:154.25px;height:1px;background:#3f6b2a;"></div>
<div class="a" style="left:96.0px;top:382.7px;width:1px;height:20.375px;background:#3f6b2a;"></div>
<div class="a" style="left:249.45px;top:381.9px;width:214.1px;height:21.975px;border:1.6px solid #1f7246;"></div>
<div class="a" style="left:460.6px;top:401.4px;width:4.4px;height:4.4px;background:#1f7246;border:0.8px solid #fff;"></div>
<div class="t" style="left:231.64px;top:244.15px;font-size:14.25px;color:#0a0a0a;transform:scaleX(0.9184);font-weight:bold;">FDIST Function</div>
<div class="t" style="left:99.89px;top:285.30px;font-size:14.25px;color:#0a0a0a;transform:scaleX(0.8865);font-weight:bold;">X</div>
<div class="t" style="left:99.16px;top:305.68px;font-size:14.25px;color:#0a0a0a;transform:scaleX(0.8976);font-weight:bold;">DF1</div>
<div class="t" style="left:99.12px;top:326.05px;font-size:14.25px;color:#0a0a0a;transform:scaleX(0.9435);font-weight:bold;">DF2</div>
<div class="t" style="left:99.14px;top:346.43px;font-size:14.25px;color:#0a0a0a;transform:scaleX(0.9223);font-weight:bold;">FDIST formula</div>
<div class="t" style="left:99.11px;top:387.18px;font-size:14.25px;color:#0a0a0a;transform:scaleX(0.9493);font-weight:bold;">Example 2</div>
<div class="t" style="left:440.79px;top:286.30px;font-size:13.83px;color:#0a0a0a;transform:scaleX(1.0350);">2.6</div>
<div class="t" style="left:444.69px;top:306.68px;font-size:13.83px;color:#0a0a0a;transform:scaleX(1.0422);">12</div>
<div class="t" style="left:452.06px;top:327.05px;font-size:13.83px;color:#0a0a0a;transform:scaleX(1.0857);">4</div>
<div class="t" style="left:378.63px;top:347.43px;font-size:13.83px;color:#0a0a0a;transform:scaleX(1.0156);">0.184449935</div>
<div class="t" style="left:378.45px;top:387.18px;font-size:14.25px;color:#0a0a0a;transform:scaleX(0.9856);font-weight:bold;">0.004695186</div>
<div class="a" style="left:367px;top:386.3px;width:104.6px;height:27px;border:1.7px solid #c94a48;"></div>
<div class="a" style="left:703.5px;top:199.5px;width:16.5px;height:276px;background:#f0f0ee;"></div>
<div class="a" style="left:704.8px;top:200.0px;width:14px;height:275px;background:#f6f6f6;border-radius:7px;"></div>
<svg style="left:708.4px;top:204.2px" width="8" height="5" viewBox="0 0 8 5"><path d="M4 0 L8 5 H0 Z" fill="#666"/></svg>
<div class="a" style="left:709.4px;top:214px;width:5.6px;height:140px;background:#6e6e6e;border-radius:3px;"></div>
<svg style="left:708.4px;top:466.4px" width="8" height="5" viewBox="0 0 8 5"><path d="M0 0 H8 L4 5 Z" fill="#666"/></svg>
<div class="a" style="left:0px;top:474.5px;width:720px;height:26px;background:#ece8e2;"></div>
<svg style="left:18px;top:482.5px" width="5" height="8.5" viewBox="0 0 5 8.5"><path d="M4.5 0.5 L0.6 4.25 L4.5 8" fill="none" stroke="#3a3a3a" stroke-width="1.1" stroke-linecap="round" stroke-linejoin="round"/></svg>
<svg style="left:44.5px;top:482.5px" width="5" height="8.5" viewBox="0 0 5 8.5"><path d="M0.5 0.5 L4.4 4.25 L0.5 8" fill="none" stroke="#3a3a3a" stroke-width="1.1" stroke-linecap="round" stroke-linejoin="round"/></svg>
<div class="a" style="left:68.5px;top:485.5px;width:2.3px;height:2.3px;background:#2b2b2b;border-radius:50%;"></div>
<div class="a" style="left:71.9px;top:485.5px;width:2.3px;height:2.3px;background:#2b2b2b;border-radius:50%;"></div>
<div class="a" style="left:75.3px;top:485.5px;width:2.3px;height:2.3px;background:#2b2b2b;border-radius:50%;"></div>
<div class="t" style="left:96.66px;top:483.50px;font-size:11.87px;color:#2b2b2b;transform:scaleX(0.8991);">BETAINV</div>
<div class="a" style="left:153px;top:481px;width:1px;height:14px;background:#d8d2cb;"></div>
<div class="t" style="left:164.39px;top:482.50px;font-size:12.15px;color:#2b2b2b;transform:scaleX(0.9816);">Ceiling function</div>
<div class="a" style="left:257.3px;top:481px;width:1px;height:14px;background:#d8d2cb;"></div>
<div class="t" style="left:267.47px;top:483.50px;font-size:11.87px;color:#2b2b2b;transform:scaleX(0.9351);">Sheet14</div>
<div class="a" style="left:318.8px;top:481px;width:1px;height:14px;background:#d8d2cb;"></div>
<div class="t" style="left:326.96px;top:483.50px;font-size:11.87px;color:#2b2b2b;transform:scaleX(0.9600);">Sheet11</div>
<div class="a" style="left:377.0px;top:485.5px;width:2.3px;height:2.3px;background:#2b2b2b;border-radius:50%;"></div>
<div class="a" style="left:380.4px;top:485.5px;width:2.3px;height:2.3px;background:#2b2b2b;border-radius:50%;"></div>
<div class="a" style="left:383.8px;top:485.5px;width:2.3px;height:2.3px;background:#2b2b2b;border-radius:50%;"></div>
<svg style="left:403px;top:482px" width="9.5" height="9.5" viewBox="0 0 9.5 9.5"><path d="M4.75 0.3 V9.2 M0.3 4.75 H9.2" stroke="#2b2b2b" stroke-width="1" fill="none"/></svg>
<div class="a" style="left:433.4px;top:483.9px;width:2.2px;height:2.2px;background:#2b2b2b;border-radius:50%;"></div>
<div class="a" style="left:433.4px;top:487.4px;width:2.2px;height:2.2px;background:#2b2b2b;border-radius:50%;"></div>
<div class="a" style="left:433.4px;top:490.9px;width:2.2px;height:2.2px;background:#2b2b2b;border-radius:50%;"></div>
<div class="a" style="left:448px;top:479.6px;width:257.4px;height:14.8px;background:#f7f6f5;border-radius:7.4px;"></div>
<svg style="left:452px;top:483.5px" width="6" height="7" viewBox="0 0 6 7"><path d="M6 0 V7 L0 3.5 Z" fill="#5a5a5a"/></svg>
<div class="a" style="left:462px;top:483.5px;width:175.6px;height:7px;background:#6e6e6e;border-radius:3.5px;"></div>
<svg style="left:695px;top:483.5px" width="6" height="7" viewBox="0 0 6 7"><path d="M0 0 L6 3.5 L0 7 Z" fill="#5a5a5a"/></svg>
<div class="a" style="left:0px;top:500.5px;width:720px;height:18.5px;background:#f3f3f3;"></div>
<div class="t" style="left:7.32px;top:506.00px;font-size:9.78px;color:#555;transform:scaleX(0.8402);">Ready</div>
<svg style="left:46.4px;top:504.6px" width="12.4" height="10.8" viewBox="0 0 12.4 10.8">
<path d="M6 9.4 H1.4 Q0.6 9.4 0.6 8.6 V1.4 Q0.6 0.6 1.4 0.6 H10.6 Q11.4 0.6 11.4 1.4 V4" fill="none" stroke="#333" stroke-width="1.15"/>
<path d="M0.6 2.6 H11.4" stroke="#333" stroke-width="1.3"/>
<path d="M2.2 5.4 H5 M2.2 7.4 H4.4" stroke="#333" stroke-width="1.1"/>
<circle cx="8.1" cy="7.3" r="3" fill="#f3f3f3" stroke="#333" stroke-width="1.15"/><circle cx="8.1" cy="7.3" r="1.35" fill="#333"/>
</svg>
<svg style="left:72px;top:503.8px" width="12.4" height="12" viewBox="0 0 12.4 12">
<circle cx="5.6" cy="1.7" r="1.25" fill="none" stroke="#333" stroke-width="1.05"/>
<path d="M0.7 3.4 Q0.9 2.6 1.8 3 L4.2 3.9 H7 L9.4 3 Q10.3 2.6 10.5 3.4 Q10.6 4 9.9 4.3 L7.4 5.3 V7.4 M3.8 5.3 L1.3 4.3 Q0.6 4 0.7 3.4 M3.8 5.3 V7.6 L2.2 11 Q1.9 11.6 2.6 11.7 Q3.1 11.7 3.4 11.1 L5.2 7.6" fill="none" stroke="#333" stroke-width="1.05" stroke-linejoin="round" stroke-linecap="round"/>
<path d="M6.8 7.6 L11.8 11.6 M11.8 7.6 L6.8 11.6" fill="none" stroke="#333" stroke-width="1.15" stroke-linecap="round"/>
</svg>
<div class="t" style="left:87.28px;top:506.00px;font-size:10.06px;color:#2b2b2b;transform:scaleX(0.8610);font-weight:bold;">Accessibility: Investigate</div>
<div class="a" style="left:466.5px;top:501.5px;width:32.3px;height:17.5px;background:#dedede;"></div>
<svg style="left:475.6px;top:504.2px" width="11.8" height="10.6" viewBox="0 0 11.8 10.6"><rect x="0.5" y="0.5" width="10.8" height="9.6" fill="none" stroke="#2b2b2b" stroke-width="1.25"/><path d="M4.1 0.5 V10.1 M7.7 0.5 V10.1 M0.5 3.7 H11.3 M0.5 6.9 H11.3" stroke="#2b2b2b" stroke-width="1.1"/></svg>
<svg style="left:510px;top:504.2px" width="11.4" height="10.6" viewBox="0 0 11.4 10.6"><rect x="0.5" y="0.5" width="10.4" height="9.6" rx="1" fill="none" stroke="#2b2b2b" stroke-width="1.25"/><rect x="3" y="2.8" width="5.4" height="5" fill="none" stroke="#2b2b2b" stroke-width="0.9"/><path d="M4.2 4.6 H7.2 M4.2 6.2 H7.2" stroke="#2b2b2b" stroke-width="0.6"/></svg>
<svg style="left:542px;top:504.2px" width="11.6" height="10.6" viewBox="0 0 11.6 10.6"><rect x="0.5" y="0.5" width="10.6" height="9.6" fill="none" stroke="#2b2b2b" stroke-width="1.25"/><path d="M3.6 0.5 V5.6 H7.8 V0.5" fill="none" stroke="#2b2b2b" stroke-width="1.1"/></svg>
<div class="a" style="left:569px;top:509px;width:6px;height:1px;background:#4a4a4a;"></div>
<div class="a" style="left:580.5px;top:509px;width:81px;height:1px;background:#7a7a7a;"></div>
<div class="a" style="left:619.2px;top:504.6px;width:4.2px;height:10.4px;background:#5a5a5a;border-radius:0.6px;"></div>
<svg style="left:666.6px;top:506.6px" width="6" height="6" viewBox="0 0 6 6"><path d="M3 0 V6 M0 3 H6" stroke="#4a4a4a" stroke-width="1" fill="none"/></svg>
<div class="t" style="left:683.34px;top:505.60px;font-size:9.78px;color:#3a3a3a;transform:scaleX(0.8819);">100%</div>
<div class="a" style="left:-3px;top:516px;width:6px;height:6px;background:#1e7246;border-radius:50%;"></div>
</body>
</html>
